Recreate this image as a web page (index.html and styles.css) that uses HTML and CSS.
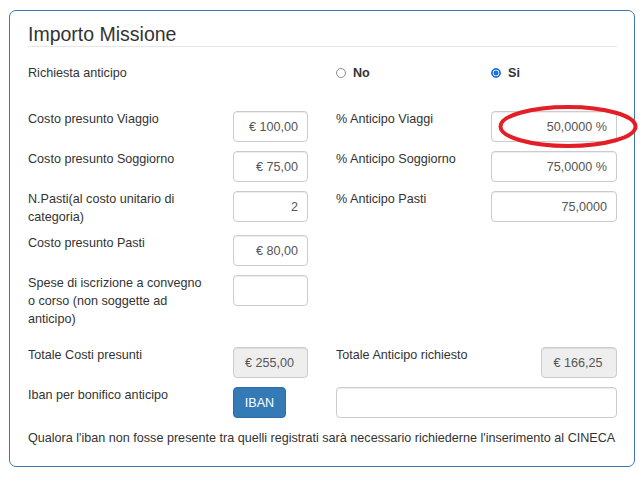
FILE: index.html
```html
<!DOCTYPE html>
<html lang="it">
<head>
<meta charset="utf-8">
<title>Importo Missione</title>
<link rel="stylesheet" href="styles.css">
</head>
<body>
<div class="card">
  <h3 class="title">Importo Missione</h3>

  <div class="row row-radio">
    <div class="label">Richiesta anticipo</div>
    <div></div>
    <label class="radio rlabel"><span class="dot"></span><b>No</b></label>
    <label class="radio"><span class="dot checked"></span><b>Si</b></label>
  </div>

  <div class="row">
    <div class="label">Costo presunto Viaggio</div>
    <div class="input">€ 100,00</div>
    <div class="label rlabel">% Anticipo Viaggi</div>
    <div class="input">50,0000 %</div>
  </div>

  <div class="row">
    <div class="label">Costo presunto Soggiorno</div>
    <div class="input">€ 75,00</div>
    <div class="label rlabel">% Anticipo Soggiorno</div>
    <div class="input">75,0000 %</div>
  </div>

  <div class="row">
    <div class="label">N.Pasti(al costo unitario di<br>categoria)</div>
    <div class="input">2</div>
    <div class="label rlabel">% Anticipo Pasti</div>
    <div class="input">75,0000</div>
  </div>

  <div class="row">
    <div class="label">Costo presunto Pasti</div>
    <div class="input">€ 80,00</div>
  </div>

  <div class="row">
    <div class="label">Spese di iscrizione a convegno<br>o corso (non soggette ad<br>anticipo)</div>
    <div class="input"></div>
  </div>

  <div class="row row-total">
    <div class="label">Totale Costi presunti</div>
    <div class="input readonly">€ 255,00</div>
    <div class="label rlabel">Totale Anticipo richiesto</div>
    <div class="total-right"><div class="input readonly wide">€ 166,25</div></div>
  </div>

  <div class="row">
    <div class="label">Iban per bonifico anticipo</div>
    <div><button class="btn" type="button">IBAN</button></div>
    <div class="input iban"></div>
  </div>

  <p class="note">Qualora l'iban non fosse presente tra quelli registrati sarà necessario richiederne l'inserimento al CINECA</p>

  <svg class="annot" width="143" height="46" viewBox="0 0 143 46" aria-hidden="true">
    <ellipse cx="71" cy="22.5" rx="67.5" ry="19.5" fill="none" stroke="#e41e26" stroke-width="4"/>
  </svg>
</div>
</body>
</html>
```

FILE: styles.css
```css
* { box-sizing: border-box; }

body {
  margin: 0;
  background: #fff;
  font-family: "Liberation Sans", Arial, sans-serif;
  font-size: 12.6px;
  line-height: 18px;
  color: #333;
}

.card {
  position: relative;
  margin: 10px 0 0 9px;
  width: 626px;
  height: 457px;
  border: 1px solid #3a78ad;
  border-radius: 7px;
  background: #fff;
  padding: 12px 17px 0 18px;
}

.title {
  margin: 0;
  font-size: 19.5px;
  font-weight: normal;
  line-height: 22px;
  padding-bottom: 1px;
  border-bottom: 1px solid #e6e6e6;
  color: #333;
}

.row {
  display: grid;
  grid-template-columns: 205px 75px 183px 126px;
  align-items: start;
  margin-top: 8px;
}

.row-radio {
  margin-top: 17px;
  margin-bottom: 28px;
}

.row-total {
  margin-top: 18px;
}

.label { line-height: 18px; }

.rlabel { padding-left: 28px; }

.input {
  margin-top: 1px;
  height: 31px;
  border: 1px solid #ccc;
  border-radius: 4px;
  box-shadow: inset 0 1px 1px rgba(0,0,0,.075);
  background: #fff;
  color: #555;
  text-align: right;
  padding: 6px 9px 0 8px;
  line-height: 18px;
}

.readonly {
  background: #eee;
  text-align: center;
  padding: 6px 2px 0 0;
}

.total-right {
  display: flex;
  justify-content: flex-end;
}

.wide { width: 76px; }

.iban {
  grid-column: 3 / 5;
  margin-left: 28px;
}

.btn {
  margin-top: 1px;
  width: 53px;
  height: 31px;
  border: 1px solid #2e6da4;
  border-radius: 4px;
  background: #337ab7;
  color: #fff;
  font-family: inherit;
  font-size: 12.6px;
  padding: 0;
  line-height: 18px;
}

.radio {
  display: flex;
  align-items: center;
  gap: 7px;
}

.radio b { font-weight: bold; color: #333; }

.dot {
  width: 10px;
  height: 10px;
  border-radius: 50%;
  border: 1px solid #8f8f8f;
  background: #fff;
  flex: none;
}

.dot.checked {
  border-color: #1a73e8;
  background: radial-gradient(circle, #1a73e8 0 2.2px, #fff 2.8px 3.2px, #1a73e8 3.6px);
}

.note {
  margin: 11px 0 0;
  line-height: 18px;
}

.annot {
  position: absolute;
  left: 487px;
  top: 93px;
}
```
